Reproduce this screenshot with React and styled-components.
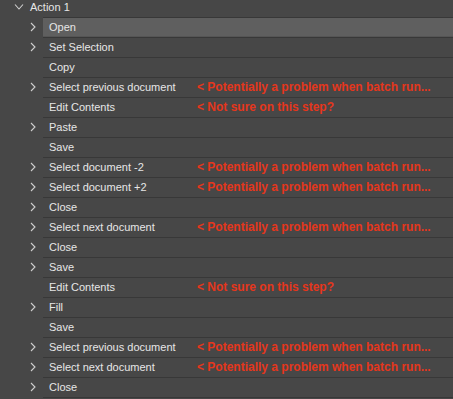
import React from 'react';
import styled, { createGlobalStyle } from 'styled-components';

const steps = [
  { label: 'Open', expandable: true, selected: true },
  { label: 'Set Selection', expandable: true },
  { label: 'Copy' },
  { label: 'Select previous document', expandable: true, note: 'batch' },
  { label: 'Edit Contents', note: 'unsure' },
  { label: 'Paste', expandable: true },
  { label: 'Save' },
  { label: 'Select document -2', expandable: true, note: 'batch' },
  { label: 'Select document +2', expandable: true, note: 'batch' },
  { label: 'Close', expandable: true },
  { label: 'Select next document', expandable: true, note: 'batch' },
  { label: 'Close', expandable: true },
  { label: 'Save', expandable: true },
  { label: 'Edit Contents', note: 'unsure' },
  { label: 'Fill', expandable: true },
  { label: 'Save' },
  { label: 'Select previous document', expandable: true, note: 'batch' },
  { label: 'Select next document', expandable: true, note: 'batch' },
  { label: 'Close', expandable: true },
];

const notes = {
  batch: '< Potentially a problem when batch run...',
  unsure: '< Not sure on this step?',
};

function ChevronRight() {
  return (
    <svg width="6" height="10" viewBox="0 0 6 10">
      <polyline points="1,1 5,5 1,9" fill="none" stroke="#cfcfcf" strokeWidth="1.1" />
    </svg>
  );
}

function ChevronDown() {
  return (
    <svg width="10" height="6" viewBox="0 0 10 6">
      <polyline points="1,0.5 5,5 9,0.5" fill="none" stroke="#cfcfcf" strokeWidth="1.1" />
    </svg>
  );
}

function App() {
  return (
    <>
      <GlobalStyle />
      <Panel>
        <Header>
          <Toggle>
            <ChevronDown />
          </Toggle>
          <ActionName>Action 1</ActionName>
        </Header>
        {steps.map((step, i) => (
          <Row key={i}>
            <Gutter>{step.expandable && <ChevronRight />}</Gutter>
            <Body $selected={step.selected}>
              <Label>{step.label}</Label>
              {step.note && <Note>{notes[step.note]}</Note>}
            </Body>
          </Row>
        ))}
        <BottomRule />
      </Panel>
    </>
  );
}

const GlobalStyle = createGlobalStyle`
  html, body {
    margin: 0;
    background: #474747;
  }
  body {
    font-family: "Liberation Sans", Arial, sans-serif;
    font-size: 11px;
    color: #e6e6e6;
  }
`;

const Panel = styled.div`
  width: 453px;
  display: flex;
  flex-direction: column;
`;

const Header = styled.div`
  height: 17px;
  display: flex;
  align-items: center;
  padding-bottom: 3px;
  box-sizing: border-box;
`;

const Toggle = styled.div`
  width: 30px;
  display: flex;
  justify-content: center;
  padding-left: 8px;
  box-sizing: border-box;
`;

const ActionName = styled.span`
  color: #e6e6e6;
`;

const Row = styled.div`
  display: flex;
  height: 20px;
`;

const Gutter = styled.div`
  width: 43px;
  display: flex;
  align-items: center;
  padding: 0 0 1px 30px;
  box-sizing: border-box;
`;

const Body = styled.div`
  flex: 1;
  display: grid;
  grid-template-columns: 148px 1fr;
  align-items: center;
  padding: 0 0 2px 6px;
  border-top: 1px solid #383838;
  background: ${(p) => (p.$selected ? '#5f5f5f' : 'transparent')};
  box-shadow: ${(p) => (p.$selected ? 'inset 0 -1px 0 #555' : 'none')};
`;

const Label = styled.span`
  white-space: nowrap;
`;

const Note = styled.span`
  color: #e5361c;
  font-size: 12px;
  font-weight: bold;
  white-space: nowrap;
`;

const BottomRule = styled.div`
  margin-left: 43px;
  border-top: 1px solid #383838;
`;

export default App;
